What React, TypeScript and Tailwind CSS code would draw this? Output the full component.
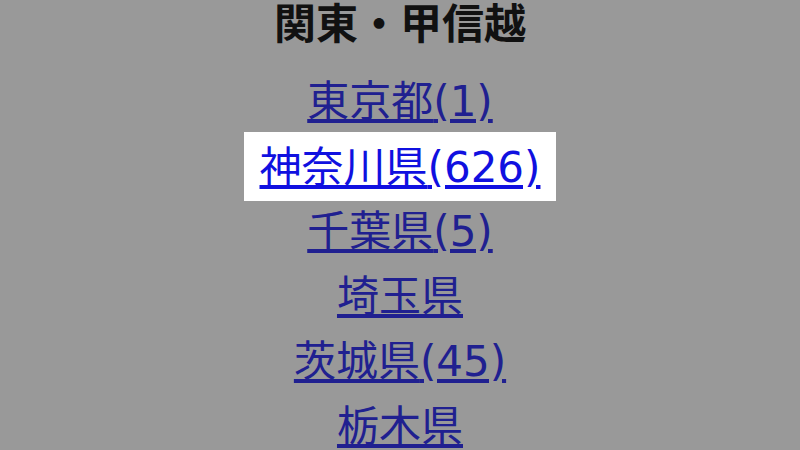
export default function App() {
  const prefs = [
    { name: "東京都", count: "(1)" },
    { name: "神奈川県", count: "(626)", active: true },
    { name: "千葉県", count: "(5)" },
    { name: "埼玉県", count: "" },
    { name: "茨城県", count: "(45)" },
    { name: "栃木県", count: "" },
  ];

  return (
    <div
      className="w-[800px] h-[450px] overflow-hidden bg-[#999999] flex flex-col items-center"
      style={{ fontFamily: '"DejaVu Sans", "Noto Sans CJK JP", sans-serif' }}
    >
      <h2 className="text-[42px] leading-[50px] font-bold text-[#111111] mt-0">関東・甲信越</h2>
      <ul className="flex flex-col items-center mt-[19px]">
        {prefs.map((p) => (
          <li key={p.name} className="h-[65px] flex items-center">
            <a
              href="#"
              className={
                p.active
                  ? "bg-white text-[#1010e0] underline px-4 pt-[9px] pb-[7px] text-[42px] leading-[53px]"
                  : "text-[#202090] underline px-4 text-[42px] leading-[53px]"
              }
            >
              {p.name}
              {p.count}
            </a>
          </li>
        ))}
      </ul>
    </div>
  );
}
